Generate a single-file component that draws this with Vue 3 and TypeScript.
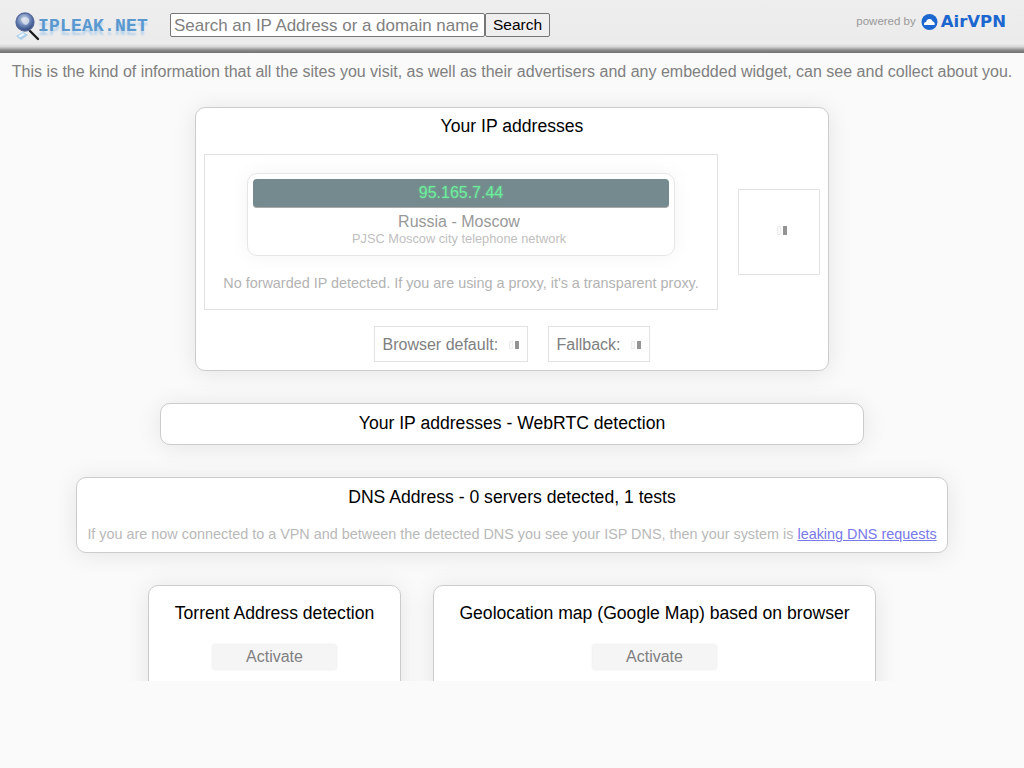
<script setup lang="ts">
const query = ''
</script>

<template>
  <div class="page">
    <header class="top">
      <div class="logo">
        <svg class="glass" width="26" height="30" viewBox="0 0 26 30">
          <defs>
            <radialGradient id="g" cx="45%" cy="35%" r="65%">
              <stop offset="0" stop-color="#d3dcec" />
              <stop offset="0.6" stop-color="#6580b4" />
              <stop offset="1" stop-color="#2f4274" />
            </radialGradient>
          </defs>
          <path d="M16 19 L24 27" stroke="#1a1a1a" stroke-width="2.4" stroke-linecap="round" />
          <path d="M2 24 L9 20 L14 23 L7 28 Z" fill="#a9cfee" />
          <path d="M4 24 L9 21 L11 22.5 L6 25.5 Z" fill="#eef6fc" />
          <circle cx="11" cy="10" r="9" fill="url(#g)" stroke="#54689a" stroke-width="1.3" />
          <path d="M7 7 Q11 3 15 7 Q16 11 12 13 Q8 12 7 7 Z" fill="#e4e9f2" opacity="0.75" />
        </svg>
        <span class="logo-text">IPLEAK.NET</span>
      </div>
      <form class="search" @submit.prevent>
        <input class="search-input" type="text" :value="query" placeholder="Search an IP Address or a domain name" />
        <button class="search-btn" type="button">Search</button>
      </form>
      <div class="powered">
        <span class="powered-label">powered by</span>
        <svg class="cloud" width="17" height="16" viewBox="0 0 17 16">
          <circle cx="8.5" cy="8" r="8" fill="#1c66cf" />
          <path d="M3.2 11 Q2.4 8.4 5 8 Q5.8 4.6 9 5 Q11.4 5.3 11.7 7.6 Q14.2 8 13.6 11 Z" fill="#fff" />
        </svg>
        <span class="brand">AirVPN</span>
      </div>
    </header>

    <main class="main">
      <p class="intro">This is the kind of information that all the sites you visit, as well as their advertisers and any embedded widget, can see and collect about you.</p>

      <div class="cards">
        <section class="card card-ip">
          <h2 class="title title-ip">Your IP addresses</h2>
          <div class="ip-row">
            <div class="ip-panel">
              <div class="ip-box">
                <div class="ip-value">95.165.7.44</div>
                <div class="ip-place">Russia - Moscow</div>
                <div class="ip-isp">PJSC Moscow city telephone network</div>
              </div>
              <div class="ip-note">No forwarded IP detected. If you are using a proxy, it's a transparent proxy.</div>
            </div>
            <div class="flag-box">
              <span class="spin"><i class="off"></i><i class="on"></i></span>
            </div>
          </div>
          <div class="defaults">
            <div class="def def-browser">Browser default:<span class="spin small"><i class="off"></i><i class="on"></i></span></div>
            <div class="def def-fallback">Fallback:<span class="spin small"><i class="off"></i><i class="on"></i></span></div>
          </div>
        </section>

        <section class="card card-webrtc">
          <h2 class="title">Your IP addresses - WebRTC detection</h2>
        </section>

        <section class="card card-dns">
          <h2 class="title">DNS Address - 0 servers detected, 1 tests</h2>
          <p class="dns-note">If you are now connected to a VPN and between the detected DNS you see your ISP DNS, then your system is <a href="#" class="link" @click.prevent>leaking DNS requests</a></p>
        </section>

        <div class="pair">
          <section class="card card-torrent">
            <h2 class="title">Torrent Address detection</h2>
            <button class="activate" type="button">Activate</button>
          </section>
          <section class="card card-geo">
            <h2 class="title">Geolocation map (Google Map) based on browser</h2>
            <button class="activate" type="button">Activate</button>
          </section>
        </div>
      </div>
    </main>
  </div>
</template>

<style>
html, body { margin: 0; background: #fafafa; }
</style>

<style scoped>
.page {
  width: 1024px;
  height: 768px;
  overflow: hidden;
  background: #fafafa;
  font-family: "Liberation Sans", Arial, sans-serif;
}
.top {
  height: 53px;
  box-sizing: border-box;
  display: flex;
  align-items: flex-start;
  background: linear-gradient(#eeeeee 0, #ebebeb 44px, #d2d2d2 47px, #8c8c8c 50px, #707070 53px);
}
.logo {
  width: 170px;
  display: flex;
  align-items: flex-start;
  padding: 12px 0 0 14px;
  box-sizing: border-box;
}
.glass { flex: none; }
.logo-text {
  font-family: "Liberation Mono", monospace;
  font-size: 18px;
  font-weight: 700;
  letter-spacing: 0.2px;
  line-height: 28px;
  color: #5a98d0;
  margin-left: -2px;
  white-space: nowrap;
  text-shadow: 0 4px 2px rgba(120, 180, 235, 0.45);
}
.search {
  display: flex;
  margin-top: 13px;
}
.search-input {
  width: 315px;
  height: 24px;
  box-sizing: border-box;
  padding: 2px 3px 1px;
  border: 1px solid #767676;
  border-radius: 2px;
  background: #fff;
  font-family: "Liberation Sans", Arial, sans-serif;
  font-size: 16.96px;
  color: #000;
}
.search-input::placeholder { color: #808080; opacity: 1; }
.search-btn {
  width: 65px;
  height: 24px;
  box-sizing: border-box;
  padding: 0;
  border: 1px solid #767676;
  border-radius: 2px;
  background: #efefef;
  font-family: "Liberation Sans", Arial, sans-serif;
  font-size: 15.5px;
  color: #000;
}
.powered {
  margin-left: auto;
  display: flex;
  align-items: center;
  height: 17px;
  margin-top: 13px;
  padding-right: 18px;
}
.powered-label {
  font-size: 11.5px;
  line-height: 15px;
  margin-top: -1px;
  color: #999;
  margin-right: 5px;
}
.cloud { flex: none; }
.brand {
  font-family: "DejaVu Sans", sans-serif;
  font-weight: 700;
  font-size: 16.5px;
  color: #1c66cf;
  margin-left: 3px;
}
.main {
  height: 628px;
  overflow: hidden;
}
.intro {
  margin: 0;
  padding-top: 9px;
  height: 54px;
  box-sizing: border-box;
  text-align: center;
  font-size: 16px;
  line-height: 19px;
  color: #808080;
}
.cards {
  display: flex;
  flex-direction: column;
  align-items: center;
  gap: 32px;
}
.card {
  box-sizing: border-box;
  background: #fff;
  border: 1px solid #ccc;
  border-radius: 10px;
  box-shadow: 0 2px 24px rgba(0, 0, 0, 0.09);
}
.title {
  margin: 0;
  font-size: 17.6px;
  font-weight: 400;
  line-height: 21px;
  color: #000;
  text-align: center;
}
.card-ip {
  width: 634px;
  height: 264px;
  padding: 8px 8px 0;
}
.title-ip { margin-bottom: 17px; }
.ip-row {
  display: flex;
  align-items: center;
  justify-content: space-between;
}
.ip-panel {
  width: 514px;
  height: 156px;
  box-sizing: border-box;
  border: 1px solid #e2e2e2;
  padding-top: 18px;
  display: flex;
  flex-direction: column;
  align-items: center;
}
.ip-box {
  width: 428px;
  height: 83px;
  box-sizing: border-box;
  border: 1px solid #e6e6e6;
  border-radius: 10px;
  box-shadow: 0 0 20px rgba(0, 0, 0, 0.05);
  padding: 5px;
  text-align: center;
}
.ip-value {
  height: 29px;
  box-sizing: border-box;
  background: #748a8e;
  border-radius: 4px;
  border-bottom: 1px solid #aaa;
  color: #6cef9c;
  font-size: 16px;
  line-height: 28px;
  text-shadow: 0 0 3px rgba(108, 239, 156, 0.5);
}
.ip-place {
  margin-top: 4px;
  padding-right: 4px;
  font-size: 16px;
  line-height: 19px;
  color: #999;
}
.ip-isp {
  padding-right: 4px;
  font-size: 12.8px;
  line-height: 15px;
  color: #c0c0c0;
}
.ip-note {
  margin-top: 19px;
  font-size: 14.4px;
  line-height: 17px;
  color: #b3b3b3;
  white-space: nowrap;
}
.flag-box {
  width: 82px;
  height: 86px;
  box-sizing: border-box;
  border: 1px solid #e2e2e2;
  display: flex;
  align-items: center;
  justify-content: center;
  padding-left: 6px;
  padding-bottom: 3px;
}
.spin {
  display: inline-flex;
  align-items: center;
  gap: 2px;
}
.spin i {
  display: block;
  width: 4px;
  height: 9px;
  box-sizing: border-box;
}
.spin .off { border: 1px solid #eee; background: #fafafa; }
.spin .on { background: #949494; }
.small { margin-left: auto; }
.small i { height: 8px; }
.defaults {
  display: flex;
  justify-content: center;
  gap: 20px;
  margin-top: 16px;
  padding-right: 1px;
}
.def {
  height: 36px;
  box-sizing: border-box;
  border: 1px solid #e2e2e2;
  display: flex;
  align-items: center;
  font-size: 16px;
  line-height: 20px;
  padding: 1px 8px 0;
  color: #808080;
}
.def-browser { width: 154px; }
.def-fallback { width: 102px; }
.card-webrtc {
  width: 704px;
  height: 42px;
  padding-top: 9px;
}
.card-dns {
  width: 872px;
  height: 76px;
  padding-top: 9px;
}
.dns-note {
  margin: 18px 0 0;
  font-size: 14.4px;
  line-height: 17px;
  color: #b9b9b9;
  text-align: center;
}
.link { color: #7878e8; text-decoration: underline; }
.pair {
  display: flex;
  gap: 32px;
}
.card-torrent, .card-geo {
  height: 200px;
  padding-top: 17px;
  text-align: center;
}
.card-torrent { width: 253px; }
.card-geo { width: 443px; }
.activate {
  display: block;
  margin: 21px auto 0;
  width: 123px;
  height: 24px;
  box-sizing: border-box;
  padding: 0;
  border: 0;
  border-radius: 1px;
  background: #f5f5f5;
  box-shadow: 0 0 3px rgba(0, 0, 0, 0.14);
  font-family: "Liberation Sans", Arial, sans-serif;
  font-size: 16px;
  color: #808080;
}
</style>
